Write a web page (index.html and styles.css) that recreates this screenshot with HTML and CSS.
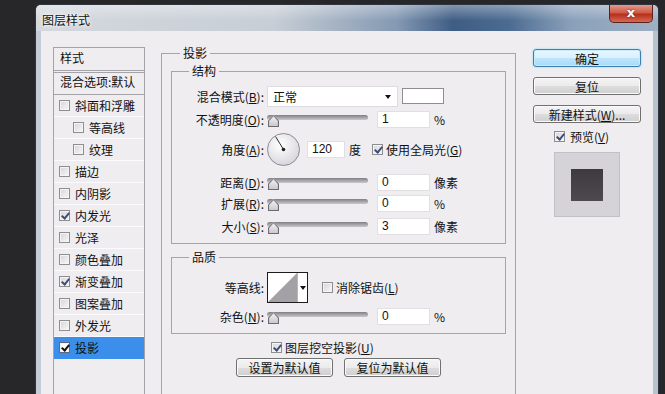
FILE: index.html
```html
<!DOCTYPE html>
<html lang="zh-CN">
<head>
  <meta charset="UTF-8" />
  <title>图层样式</title>
  <link rel="stylesheet" href="styles.css">
</head>
<body>
  <div class="win">
    <div class="titlebar">
      <span class="title">图层样式</span>
      <span class="close">x</span>
    </div>
    <div class="client">
      <div class="list">
        <div class="list-head">样式</div>
        <div class="list-blend">混合选项:默认</div>
        <div class="item"><span class="cb"></span>斜面和浮雕</div>
        <div class="item sub"><span class="cb"></span>等高线</div>
        <div class="item sub"><span class="cb"></span>纹理</div>
        <div class="item"><span class="cb"></span>描边</div>
        <div class="item"><span class="cb"></span>内阴影</div>
        <div class="item"><span class="cb on"></span>内发光</div>
        <div class="item"><span class="cb"></span>光泽</div>
        <div class="item"><span class="cb"></span>颜色叠加</div>
        <div class="item"><span class="cb on"></span>渐变叠加</div>
        <div class="item"><span class="cb"></span>图案叠加</div>
        <div class="item"><span class="cb"></span>外发光</div>
        <div class="item sel"><span class="cb on"></span>投影</div>
      </div>

      <fieldset class="group main">
        <legend>投影</legend>

        <fieldset class="group inner struct">
          <legend>结构</legend>
          <div class="row r-blend">
            <span class="lbl">混合模式(<u>B</u>):</span>
            <div class="select">正常<span class="arrow"></span></div>
            <div class="swatch"></div>
          </div>
          <div class="row r-opacity">
            <span class="lbl">不透明度(<u>O</u>):</span>
            <div class="slider"><div class="track"></div><span class="thumb"></span></div>
            <div class="field">1</div>
            <span class="unit">%</span>
          </div>
          <div class="row r-angle">
            <span class="lbl">角度(<u>A</u>):</span>
            <svg class="dial" width="33" height="33" viewBox="0 0 33 33">
              <defs>
                <radialGradient id="dialFill" cx="40%" cy="35%" r="70%">
                  <stop offset="0" stop-color="#ffffff"/>
                  <stop offset="1" stop-color="#d6d4da"/>
                </radialGradient>
              </defs>
              <circle cx="16.5" cy="16.5" r="16" fill="url(#dialFill)" stroke="#8c8a90"/>
              <line x1="16.5" y1="16.5" x2="8.6" y2="3.6" stroke="#2a2a2a" stroke-width="1"/>
              <circle cx="16.5" cy="16.5" r="1.8" fill="#222"/>
            </svg>
            <div class="field angle">120</div>
            <span class="unit deg">度</span>
            <span class="cb on global"></span>
            <span class="cb-text">使用全局光(<u>G</u>)</span>
          </div>
          <div class="row r-distance">
            <span class="lbl">距离(<u>D</u>):</span>
            <div class="slider"><div class="track"></div><span class="thumb"></span></div>
            <div class="field">0</div>
            <span class="unit">像素</span>
          </div>
          <div class="row r-spread">
            <span class="lbl">扩展(<u>R</u>):</span>
            <div class="slider"><div class="track"></div><span class="thumb"></span></div>
            <div class="field">0</div>
            <span class="unit">%</span>
          </div>
          <div class="row r-size">
            <span class="lbl">大小(<u>S</u>):</span>
            <div class="slider"><div class="track"></div><span class="thumb"></span></div>
            <div class="field">3</div>
            <span class="unit">像素</span>
          </div>
        </fieldset>

        <fieldset class="group inner quality">
          <legend>品质</legend>
          <div class="row r-contour">
            <span class="lbl">等高线:</span>
            <div class="contour">
              <svg width="29" height="29" viewBox="0 0 29 29">
                <polygon points="0,29 29,0 29,29" fill="#a3a1a6"/>
              </svg>
              <span class="contour-drop"><span class="arrow"></span></span>
            </div>
            <span class="cb aa"></span>
            <span class="cb-text">消除锯齿(<u>L</u>)</span>
          </div>
          <div class="row r-noise">
            <span class="lbl">杂色(<u>N</u>):</span>
            <div class="slider"><div class="track"></div><span class="thumb"></span></div>
            <div class="field">0</div>
            <span class="unit">%</span>
          </div>
        </fieldset>

        <div class="knock"><span class="cb on"></span><span class="cb-text">图层挖空投影(<u>U</u>)</span></div>
        <div class="defaults">
          <button class="btn">设置为默认值</button>
          <button class="btn">复位为默认值</button>
        </div>
      </fieldset>

      <div class="side">
        <button class="btn ok">确定</button>
        <button class="btn">复位</button>
        <button class="btn">新建样式(<u>W</u>)...</button>
        <div class="preview-check"><span class="cb on"></span><span class="cb-text">预览(<u>V</u>)</span></div>
        <div class="preview"><div class="preview-shape"></div></div>
      </div>
    </div>
  </div>
</body>
</html>
```

FILE: styles.css
```css
* { margin: 0; padding: 0; box-sizing: border-box; }
body {
  width: 665px;
  height: 394px;
  overflow: hidden;
  background: #27272a;
  font-family: "Noto Sans CJK SC", "Noto Sans", sans-serif;
  font-size: 12px;
  color: #111;
}
u { text-decoration: underline; text-underline-offset: 1px; }

/* window frame */
.win {
  margin: 4px 0 0 35px;
  width: 624px;
  height: 400px;
  border: 1px solid #2e3440;
  border-bottom: none;
  border-radius: 6px 6px 0 0;
  background: linear-gradient(90deg, #c4ccd6 0%, #bcc5d0 55%, #8fa3bb 75%, #b8c3d0 100%);
  overflow: hidden;
}
.titlebar {
  height: 26px;
  display: flex;
  align-items: flex-start;
  padding-right: 5px;
  background:
    linear-gradient(180deg, rgba(255,255,255,0.35), rgba(255,255,255,0) 60%),
    linear-gradient(90deg, #d4d8de 0%, #c8ced6 38%, #8499b3 58%, #3f5d84 67%, #4c6b91 76%, #8aa0ba 86%, #9fb0c4 100%);
}
.title {
  margin: 6px 0 0 6px;
  font-size: 12px;
  color: #111;
  text-shadow: 0 0 6px #fff, 0 0 3px #fff;
}
.close {
  margin-left: auto;
  width: 44px;
  height: 18px;
  border: 1px solid #5e2019;
  border-top: none;
  border-radius: 0 0 5px 5px;
  background: linear-gradient(180deg, #e39a8d 0%, #cf5a46 45%, #b52f1d 55%, #d66a55 100%);
  color: #fff;
  font-family: "DejaVu Sans", sans-serif;
  font-weight: bold;
  font-size: 13px;
  line-height: 15px;
  text-align: center;
  text-shadow: 0 0 2px #6b1b10;
}

/* dialog body */
.client {
  margin: 0 5px;
  height: 370px;
  background: #efedf0;
  display: flex;
  align-items: flex-start;
  padding-left: 12px;
  border-top: 0;
}

/* style list */
.list {
  margin-top: 16px;
  width: 92px;
  height: 360px;
  border: 1px solid #a5a3a8;
}
.list-head {
  height: 25px;
  padding: 1px 0 0 6px;
  line-height: 17px;
  border-bottom: 3px double #a5a3a8;
}
.list-blend {
  height: 22px;
  padding-left: 6px;
  line-height: 18px;
  border-bottom: 1px solid #a5a3a8;
}
.item {
  height: 22px;
  display: flex;
  align-items: center;
  gap: 5px;
  padding-left: 5px;
  border-bottom: 1px solid #fbfafc;
}
.item.sub { padding-left: 19px; }
.item.sel { background: #3b8fea; border-bottom-color: #3b8fea; }
.item.sel .cb { background: #fff; border-color: #5c6a80; }
.item.sel .cb.on::after { border-color: #111; }

/* checkbox */
.cb {
  position: relative;
  flex: none;
  width: 11px;
  height: 11px;
  border: 1px solid #8e8e90;
  background: linear-gradient(135deg, #d6d6d8, #f7f7f8);
  box-shadow: inset 0 0 0 1px #f4f4f5;
}
.cb.on::after {
  content: "";
  position: absolute;
  left: 3px;
  top: 0;
  width: 3px;
  height: 6px;
  border: solid #3c4f78;
  border-width: 0 2px 2px 0;
  transform: rotate(40deg);
}
.cb-text { margin-left: 3px; }

/* group boxes */
.group {
  border: 1px solid #a6a4a9;
  min-width: 0;
}
.group legend {
  padding: 0 3px;
  line-height: 14px;
}
.main {
  margin: 15px 0 0 16px;
  width: 355px;
  height: 380px;
  padding: 0 9px;
}
.main > legend { margin-left: 9px; }
.inner { padding: 0 0 8px; }
.inner > legend { margin-left: 17px; }
.struct { margin-top: 4px; }
.quality { margin-top: 6px; }

.row {
  display: flex;
  align-items: center;
}
.lbl {
  width: 92px;
  flex: none;
  text-align: right;
  margin-right: 3px;
  white-space: nowrap;
}
.r-blend { margin-top: 7px; height: 22px; }
.r-opacity { margin-top: 4px; height: 17px; }
.r-angle { margin-top: 5px; height: 33px; }
.r-distance { margin-top: 8px; height: 17px; }
.r-spread { margin-top: 4px; height: 17px; }
.r-size { margin-top: 6px; height: 17px; }
.r-contour { margin-top: 8px; height: 31px; }
.r-noise { margin-top: 5px; height: 17px; }

.select {
  position: relative;
  width: 131px;
  height: 21px;
  background: #fff;
  border: 1px solid #dedce1;
  padding-left: 5px;
  line-height: 19px;
}
.arrow {
  position: absolute;
  width: 0;
  height: 0;
  border-left: 3px solid transparent;
  border-right: 3px solid transparent;
  border-top: 4px solid #111;
}
.select .arrow { right: 6px; top: 8px; }
.swatch {
  margin-left: 4px;
  width: 42px;
  height: 16px;
  background: #fff;
  border: 1px solid #8f8d93;
}

.slider {
  position: relative;
  width: 101px;
  height: 17px;
}
.track {
  margin-top: 4px;
  height: 5px;
  border-radius: 3px;
  background: linear-gradient(180deg, #807e84 0%, #a6a4a9 50%, #c9c7cc 100%);
}
.thumb {
  position: absolute;
  left: 1px;
  top: 4px;
  width: 11px;
  height: 12px;
  background: linear-gradient(180deg, #f5f5f6, #c8c6cb);
  clip-path: polygon(0 100%, 0 45%, 50% 0, 100% 45%, 100% 100%);
}
.thumb::before {
  content: "";
  position: absolute;
  inset: 0;
  background: #6d6b71;
  clip-path: polygon(0 100%, 0 45%, 50% 0, 100% 45%, 100% 100%, 90% 100%, 90% 50%, 50% 10%, 10% 50%, 10% 92%, 90% 92%, 90% 100%);
}
.field {
  margin-left: 9px;
  width: 53px;
  height: 17px;
  background: #fff;
  border: 1px solid #e1dfe3;
  padding-left: 4px;
  font-family: "Liberation Sans", Arial, sans-serif;
  font-size: 12px;
  line-height: 15px;
}
.field.angle { margin-left: 7px; width: 38px; }
.unit { margin-left: 4px; }
.unit.deg { margin-left: 4px; }
.cb.global { margin-left: 11px; }
.dial { flex: none; }

.contour {
  position: relative;
  display: flex;
  width: 41px;
  height: 31px;
  border: 1px solid #1c1c1c;
  background: #fff;
}
.contour svg { display: block; }
.contour-drop {
  position: relative;
  width: 10px;
  border-left: 1px solid #b9b7bc;
}
.contour-drop .arrow { left: 2px; top: 13px; }
.cb.aa { margin-left: 14px; }

.knock {
  margin-top: 6px;
  height: 14px;
  padding-left: 100px;
  display: flex;
  align-items: center;
}
.defaults {
  margin-top: 4px;
  display: flex;
  justify-content: center;
  gap: 11px;
}

/* buttons */
.btn {
  display: block;
  height: 19px;
  width: 97px;
  border: 1px solid #707070;
  border-radius: 3px;
  background: linear-gradient(180deg, #f4f4f4 0%, #ebebeb 50%, #dddddd 51%, #cfcfcf 100%);
  box-shadow: inset 0 0 0 1px #fbfbfb;
  font-family: "Noto Sans CJK SC", "Noto Sans", sans-serif;
  font-size: 12px;
  line-height: 15px;
  color: #111;
}

.side {
  margin: 18px 0 0 17px;
  width: 108px;
}
.side .btn { width: 108px; height: 18px; margin-bottom: 10px; }
.btn.ok {
  border-color: #3c7fb1;
  background: linear-gradient(180deg, #eaf6fd 0%, #d9f0fc 50%, #bee6fd 51%, #a7d9f5 100%);
  box-shadow: inset 0 0 0 1px #c4ecfb, 0 0 2px #7fd0f0;
}
.preview-check {
  margin-top: -3px;
  height: 13px;
  padding-left: 21px;
  display: flex;
  align-items: center;
}
.preview-check .cb-text { margin-left: 5px; }
.preview {
  margin: 9px 0 0 21px;
  width: 66px;
  height: 65px;
  background: #d5d3d8;
  border: 1px solid #c2c0c5;
  display: flex;
  align-items: center;
  justify-content: center;
}
.preview-shape {
  width: 32px;
  height: 32px;
  background: linear-gradient(180deg, #3f3a40, #4e494f);
}
```
